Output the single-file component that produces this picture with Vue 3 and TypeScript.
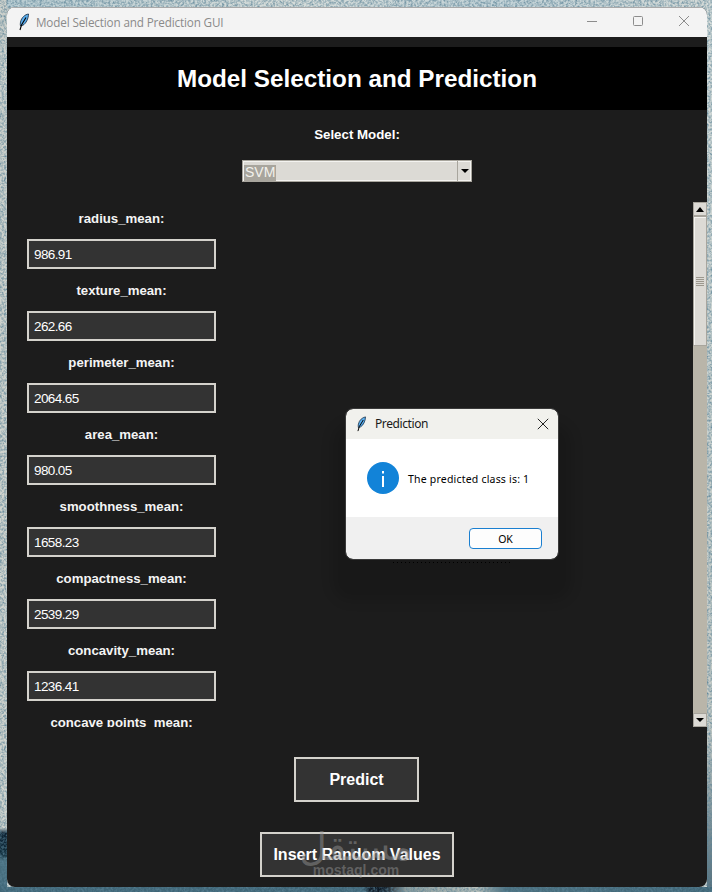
<script setup lang="ts">
// Tk style model picker with the "Prediction" message box open on top
interface Field {
  name: string
  value: string
}

const fields: Field[] = [
  { name: 'radius_mean', value: '986.91' },
  { name: 'texture_mean', value: '262.66' },
  { name: 'perimeter_mean', value: '2064.65' },
  { name: 'area_mean', value: '980.05' },
  { name: 'smoothness_mean', value: '1658.23' },
  { name: 'compactness_mean', value: '2539.29' },
  { name: 'concavity_mean', value: '1236.41' },
  { name: 'concave points_mean', value: '' },
]

const featherBlue = '#5aaeee'
</script>

<template>
  <div class="desktop">
    <!-- wallpaper grain -->
    <svg class="grain" width="712" height="892">
      <filter id="noise">
        <feTurbulence type="fractalNoise" baseFrequency="0.45" numOctaves="3" seed="4" />
        <feColorMatrix type="matrix" values="0 0 0 0 0.1  0 0 0 0 0.22  0 0 0 0 0.3  1.6 0 0 0 -0.55" />
      </filter>
      <rect width="712" height="892" filter="url(#noise)" />
    </svg>

    <div class="window">
      <div class="titlebar">
        <svg class="feather" width="12" height="18" viewBox="0 0 12 18">
          <path d="M10.500 1C7 1.500 3.500 4.500 2.500 9c-.3 1.600-.3 3 0 4l2.500-.8C8 10.500 10.500 5.500 10.500 1z" :fill="featherBlue" stroke="#10233a" stroke-width=".8" />
          <path d="M8 4.500 3.500 12 2 17" fill="none" stroke="#000" stroke-width="1.100" />
        </svg>
        <span class="titlebar-text">Model Selection and Prediction GUI</span>
        <div class="controls">
          <svg width="12" height="12" viewBox="0 0 12 12"><path d="M1 6.500h10" stroke="#8c8c8c" fill="none" /></svg>
          <svg width="12" height="12" viewBox="0 0 12 12"><rect x="1.500" y="1.500" width="9" height="9" rx="1" stroke="#8c8c8c" fill="none" /></svg>
          <svg width="12" height="12" viewBox="0 0 12 12"><path d="M1 1l10 10M11 1 1 11" stroke="#8c8c8c" fill="none" /></svg>
        </div>
      </div>

      <div class="content">
        <h1 class="heading">Model Selection and Prediction</h1>
        <div class="select-label">Select Model:</div>
        <div class="combo">
          <div class="combo-field"><span class="combo-value">SVM</span></div>
          <div class="combo-arrow"><i class="tri-down"></i></div>
        </div>

        <div class="scroll-area">
          <div class="fields">
            <div v-for="f in fields" :key="f.name" class="field">
              <div class="field-label">{{ f.name }}:</div>
              <input class="field-input" :value="f.value" readonly />
            </div>
          </div>
          <div class="scrollbar">
            <div class="sb-btn"><i class="tri-up"></i></div>
            <div class="sb-thumb">
              <span></span><span></span><span></span><span></span><span></span>
            </div>
            <div class="sb-trough"></div>
            <div class="sb-btn sb-btn-end"><i class="tri-down"></i></div>
          </div>
        </div>

        <div class="actions">
          <button class="btn btn-predict">Predict</button>
          <button class="btn btn-random">Insert Random Values</button>
        </div>
      </div>
    </div>

    <div class="dialog">
      <div class="dialog-title">
        <svg class="feather" width="11" height="16" viewBox="0 0 12 18">
          <path d="M10.500 1C7 1.500 3.500 4.500 2.500 9c-.3 1.600-.3 3 0 4l2.500-.8C8 10.500 10.500 5.500 10.500 1z" :fill="featherBlue" stroke="#10233a" stroke-width=".8" />
          <path d="M8 4.500 3.500 12 2 17" fill="none" stroke="#000" stroke-width="1.100" />
        </svg>
        <span class="dialog-title-text">Prediction</span>
        <svg class="dialog-close" width="12" height="12" viewBox="0 0 12 12"><path d="M.8.8l10.400 10.400M11.200.8.8 11.200" stroke="#222" fill="none" /></svg>
      </div>
      <div class="dialog-body">
        <svg width="32" height="32" viewBox="0 0 32 32">
          <circle cx="16" cy="16" r="16" fill="#1283d8" />
          <rect x="15" y="14" width="2" height="11" fill="#fff" />
          <rect x="15" y="9" width="2" height="2.500" fill="#fff" />
        </svg>
        <span class="dialog-msg">The predicted class is: 1</span>
      </div>
      <div class="dialog-foot">
        <button class="ok">OK</button>
      </div>
    </div>
    <div class="dither"></div>

    <div class="watermark">
      <div class="wm-ar" dir="rtl">مستقل</div>
      <div class="wm-lat">mostaql.com</div>
    </div>
  </div>
</template>

<style scoped>
.desktop {
  position: relative;
  width: 712px;
  height: 892px;
  padding: 7px 5px 5px 7px;
  box-sizing: border-box;
  overflow: hidden;
  background-color: #cfd6d3;
  background-image:
    linear-gradient(to right, #3f6677 0 51%, #0e1a26 52%, #0e1a26 54%, #8f9f9f 57%, #b7bfba 67%, #4a6f7e 71%, #3f6677 100%),
    linear-gradient(to bottom, #d5dcda 0, #c8cfcb 60%, #c6cbc6 82%, #7f939a 92%, #56707c 100%),
    linear-gradient(to bottom, #cdd1cc 0, #d1d4ce 92.800%, #0d2233 93.400%, #12303f 95.800%, #4a7181 96.500%, #3f6677 100%),
    linear-gradient(to right, #b9cdd3, #d6dcd9 40%, #c3d3d8 70%, #d4dad7);
  background-repeat: no-repeat;
  background-size: 100% 5px, 5px 100%, 7px 100%, 100% 7px;
  background-position: 0 100%, 100% 0, 0 0, 0 0;
}

.grain {
  position: absolute;
  left: 0;
  top: 0;
}

.window {
  position: relative;
  width: 700px;
  height: 880px;
  display: flex;
  flex-direction: column;
  border-radius: 8px;
  overflow: hidden;
  background: #1c1c1c;
}

.titlebar {
  height: 30px;
  flex: none;
  display: flex;
  align-items: center;
  padding-left: 11px;
  background: #f3f3f3;
  box-shadow: inset 0 1px 0 #a9a9a9;
}

.titlebar-text {
  margin-left: 6px;
  font: 11.700px "Open Sans", sans-serif;
  letter-spacing: -0.14px;
  color: #8a8a8a;
}

.controls {
  margin-left: auto;
  margin-top: -2px;
  display: flex;
  gap: 34px;
  padding-right: 17px;
}

.content {
  flex: 1;
  display: flex;
  flex-direction: column;
  align-items: center;
  padding-top: 10px;
  font-family: "Liberation Sans", Arial, sans-serif;
}

.heading {
  align-self: stretch;
  height: 63px;
  margin: 0;
  background: #000;
  color: #fff;
  font-size: 24.270px;
  font-weight: 700;
  line-height: 63px;
  text-align: center;
}

.select-label {
  margin-top: 17px;
  color: #fff;
  font-size: 13.300px;
  font-weight: 700;
  line-height: 16px;
}

.combo {
  margin-top: 17px;
  width: 230px;
  height: 22px;
  display: flex;
  box-sizing: border-box;
  background: #dcdad5;
  border: 1px solid #a8a59d;
  box-shadow: inset 1px 1px 0 #f4f3f0, inset -1px -1px 0 #f4f3f0;
}

.combo-field {
  flex: 1;
  padding: 2px 1px;
}

.combo-value {
  display: inline-block;
  padding: 0 1px;
  height: 16px;
  line-height: 15px;
  font-size: 14px;
  color: #f2f1ec;
  background: #a8a59d;
}

.combo-arrow {
  width: 13px;
  display: flex;
  align-items: center;
  justify-content: center;
  border-left: 1px solid #a8a59d;
}

.tri-down,
.tri-up {
  display: block;
  width: 0;
  height: 0;
  border-left: 4px solid transparent;
  border-right: 4px solid transparent;
}

.tri-down {
  border-top: 4px solid #000;
}

.tri-up {
  border-bottom: 5px solid #000;
}

.scroll-area {
  align-self: stretch;
  margin-top: 20px;
  height: 525px;
  display: flex;
  overflow: hidden;
}

.fields {
  width: 228px;
  padding-left: 20px;
  box-sizing: border-box;
}

.field {
  width: 189px;
  height: 72px;
}

.field-label {
  height: 37px;
  padding-top: 9px;
  box-sizing: border-box;
  color: #f4f4f4;
  font-size: 13.200px;
  font-weight: 700;
  line-height: 16px;
  text-align: center;
}

.field-input {
  display: block;
  width: 189px;
  height: 30px;
  box-sizing: border-box;
  padding: 0 5px;
  border: 2px solid #d4d2cc;
  background: #333;
  color: #fff;
  font: 13.500px "Liberation Sans", Arial, sans-serif;
  letter-spacing: -0.6px;
  outline: none;
}

.scrollbar {
  margin-left: auto;
  width: 14px;
  display: flex;
  flex-direction: column;
  background: #b9b5a9;
}

.sb-btn {
  height: 14px;
  flex: none;
  display: flex;
  align-items: center;
  justify-content: center;
  box-sizing: border-box;
  background: #dcdad5;
  border: 1px solid #a8a59d;
}

.sb-thumb {
  height: 130px;
  flex: none;
  display: flex;
  flex-direction: column;
  justify-content: center;
  gap: 1px;
  box-sizing: border-box;
  padding: 0 2px;
  background: #dcdad5;
  border: 1px solid #a8a59d;
  box-shadow: inset 1px 1px 0 #f4f3f0;
}

.sb-thumb span {
  display: block;
  height: 1px;
  background: #9c988e;
}

.sb-trough {
  flex: 1;
}

.actions {
  display: flex;
  flex-direction: column;
  align-items: center;
  gap: 30px;
  margin-top: 30px;
}

.btn {
  height: 45px;
  box-sizing: border-box;
  border: 2px solid #d4d2cc;
  background: #333;
  color: #fff;
  font: 700 16px "Liberation Sans", Arial, sans-serif;
  padding: 0;
}

.btn-predict {
  width: 125px;
  margin-right: 1px;
}

.btn-random {
  width: 194px;
}

/* message box floats over the main window */
.dialog {
  position: absolute;
  left: 346px;
  top: 409px;
  width: 212px;
  height: 150px;
  display: flex;
  flex-direction: column;
  border-radius: 7px;
  overflow: hidden;
  outline: 1px solid #3a3a3a;
  box-shadow: 0 28px 12px 14px rgba(0, 0, 0, 0.13);
  font-family: "Noto Sans", "Open Sans", sans-serif;
}

.dialog-title {
  height: 30px;
  flex: none;
  display: flex;
  align-items: center;
  padding: 0 9px 0 10px;
  background: #f1f1ed;
}

.dialog-title-text {
  margin-left: 8px;
  padding-bottom: 2px;
  font-size: 12px;
  letter-spacing: -0.4px;
  color: #1a1a1a;
}

.dialog-close {
  margin-left: auto;
}

.dialog-body {
  height: 78px;
  flex: none;
  display: flex;
  align-items: center;
  gap: 9px;
  padding-left: 21px;
  background: #fff;
}

.dialog-msg {
  padding-top: 2px;
  font-size: 10.500px;
  letter-spacing: 0.2px;
  color: #000;
}

.dialog-foot {
  flex: 1;
  display: flex;
  justify-content: flex-end;
  align-items: flex-start;
  padding: 11px 16px 0 0;
  background: #f0f0f0;
}

.ok {
  width: 73px;
  height: 21px;
  padding: 0;
  box-sizing: border-box;
  border: 1px solid #1a7fd0;
  border-radius: 4px;
  background: #fdfdfd;
  color: #000;
  font: 10.500px "Noto Sans", sans-serif;
}

/* stippled edge of the shadow just under the message box */
.dither {
  position: absolute;
  left: 393px;
  top: 562px;
  width: 117px;
  height: 1px;
  background: repeating-linear-gradient(to right, #000 0 1px, transparent 1px 4px);
}

/* site watermark printed over the screenshot */
.watermark {
  position: absolute;
  left: 256px;
  width: 200px;
  top: 831px;
  text-align: center;
  color: rgba(150, 150, 150, 0.48);
  pointer-events: none;
}

.wm-ar {
  font: 400 38px/32px "DejaVu Sans", sans-serif;
}

.wm-lat {
  font: 700 14px/16px "Liberation Sans", sans-serif;
  margin-top: -1px;
}
</style>

<style>
html,
body {
  margin: 0;
  background: #2f5566;
}
</style>
